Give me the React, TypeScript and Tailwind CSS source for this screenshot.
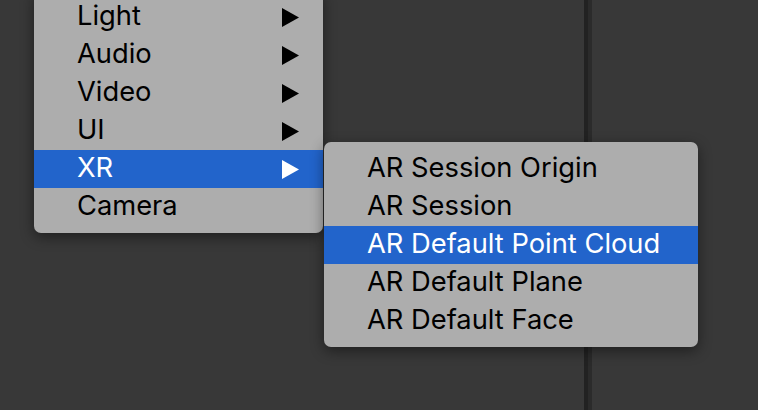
import React from 'react';

const mainItems = [
  { label: 'Light', sub: true },
  { label: 'Audio', sub: true },
  { label: 'Video', sub: true },
  { label: 'UI', sub: true },
  { label: 'XR', sub: true, active: true },
  { label: 'Camera', sub: false },
];

const xrItems = [
  { label: 'AR Session Origin' },
  { label: 'AR Session' },
  { label: 'AR Default Point Cloud', active: true },
  { label: 'AR Default Plane' },
  { label: 'AR Default Face' },
];

function Arrow({ white }: { white?: boolean }) {
  return (
    <svg width="17" height="19" viewBox="0 0 17 19" className="shrink-0">
      <polygon points="0,0 17,9.5 0,19" fill={white ? '#ffffff' : '#000000'} />
    </svg>
  );
}

export default function App() {
  return (
    <div
      className="relative w-[758px] h-[410px] overflow-hidden bg-[#383838] flex"
      style={{ fontFamily: 'Inter, "Noto Sans", sans-serif' }}
    >
      {/* panels behind the menus */}
      <div className="w-[584px] h-full bg-[#383838]" />
      <div className="w-[4px] h-full bg-[#222222]" />
      <div className="w-[4px] h-full bg-[#2b2b2b]" />
      <div className="flex-1 h-full bg-[#383838]" />

      {/* GameObject menu */}
      <div className="absolute left-[34px] top-[-10px] w-[289px] pt-[8px] pb-[7px] bg-[#adadad] rounded-[7px] shadow-[0_4px_14px_rgba(0,0,0,0.45)]">
        {mainItems.map((item) => (
          <div
            key={item.label}
            className={`h-[38px] flex items-center pl-[43px] pr-[24px] text-[27.3px] leading-none ${
              item.active ? 'bg-[#2264cb] text-white' : 'text-black'
            }`}
          >
            <span className="flex-1 -mt-[2px]">{item.label}</span>
            {item.sub && <Arrow white={item.active} />}
          </div>
        ))}
      </div>

      {/* XR submenu */}
      <div className="absolute left-[324px] top-[142px] w-[374px] pt-[8px] pb-[7px] bg-[#adadad] rounded-[7px] shadow-[0_4px_14px_rgba(0,0,0,0.45)]">
        {xrItems.map((item) => (
          <div
            key={item.label}
            className={`h-[38px] flex items-center pl-[43px] text-[27.3px] leading-none ${
              item.active ? 'bg-[#2264cb] text-white' : 'text-black'
            }`}
          >
            <span className="-mt-[2px]">{item.label}</span>
          </div>
        ))}
      </div>
    </div>
  );
}
